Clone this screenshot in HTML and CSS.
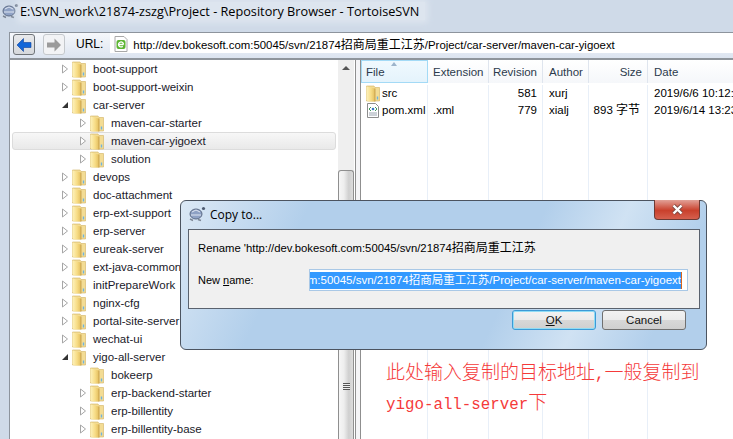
FILE: index.html
```html
<!DOCTYPE html>
<html lang="zh-CN">
<head>
  <meta charset="UTF-8" />
  <title>Repository Browser - TortoiseSVN</title>
  <link rel="stylesheet" href="styles.css">
</head>
<body>
  <svg class="defs" width="0" height="0">
    <defs>
      <linearGradient id="fold" x1="0" y1="0" x2="1" y2="0">
        <stop offset="0" stop-color="#fdf2bc"/>
        <stop offset="0.55" stop-color="#f7dc85"/>
        <stop offset="1" stop-color="#e2bd5e"/>
      </linearGradient>
      <symbol id="folder" viewBox="0 0 14 17">
        <path d="M.5 1h7.500l1 1.500h4.500v13.500H.5z" fill="#f3dc94" stroke="#d2b162" stroke-width=".6"/>
        <path d="M.5 1.500l8.500 2v13H2L.5 15z" fill="url(#fold)"/>
        <path d="M9 3.500v13" stroke="#c09a48" stroke-width=".8"/>
        <path d="M11.500 11.500v3" stroke="#6fb4de" stroke-width="1.400"/>
      </symbol>
      <symbol id="turtle" viewBox="0 0 18 16">
        <ellipse cx="8" cy="8" rx="6" ry="5" fill="#8ea1c4" stroke="#5d6b85"/>
        <path d="M4 6l4-2 4 2M3 9h10" stroke="#dfe6f2" fill="none"/>
        <circle cx="15.500" cy="2.500" r="1.600" fill="#4d5a70"/>
        <path d="M2 13l3 1.500M10 13.500l3 1" stroke="#7b8594" stroke-width="1.500"/>
      </symbol>
      <symbol id="closed" viewBox="0 0 8 10">
        <path d="M1.500 1l5 4-5 4z" fill="#fff" stroke="#a6a6a6"/>
      </symbol>
      <symbol id="opened" viewBox="0 0 8 8">
        <path d="M7 1v6H1z" fill="#333"/>
      </symbol>
    </defs>
  </svg>

  <header class="titlebar">
    <svg class="turtle"><use href="#turtle"/></svg>
    <span class="titletext">E:\SVN_work\21874-zszg\Project - Repository Browser - TortoiseSVN</span>
  </header>

  <main class="window">
    <div class="toolbar">
      <button class="navbtn active">
        <svg width="16" height="14" viewBox="0 0 16 14"><path d="M1 7l6.500-6.500v4H15v5H7.500v4z" fill="#1266d8" stroke="#0b3f9a" stroke-width=".6"/></svg>
      </button>
      <button class="navbtn">
        <svg width="16" height="14" viewBox="0 0 16 14"><path d="M15 7L8.500.5v4H1v5h7.500v4z" fill="#9b9b9b"/></svg>
      </button>
      <span class="urllabel">URL:</span>
      <div class="urlbox">
        <svg class="urlicon" width="14" height="16" viewBox="0 0 14 16">
          <path d="M1 .5h9l3 3v12H1z" fill="#fff" stroke="#a8a8a8"/>
          <rect x="2.500" y="4" width="9" height="9" rx="2" fill="#5cb531"/>
          <path d="M5 8.500h4.500M9.500 8.500a2.500 2.500 0 1 0-.8 1.800" stroke="#fff" stroke-width="1.300" fill="none"/>
        </svg>
        <span>http://dev.bokesoft.com:50045/svn/21874<span class="cjk">招商局重工江苏</span>/Project/car-server/maven-car-yigoext</span>
      </div>
    </div>

    <div class="panes">
      <div class="tree">
        <ul class="rows">
          <li class="row lv1"><svg class="tw"><use href="#closed"/></svg><svg class="fd"><use href="#folder"/></svg>boot-support</li>
          <li class="row lv1"><svg class="tw"><use href="#closed"/></svg><svg class="fd"><use href="#folder"/></svg>boot-support-weixin</li>
          <li class="row lv1"><svg class="tw"><use href="#opened"/></svg><svg class="fd"><use href="#folder"/></svg>car-server</li>
          <li class="row lv2"><svg class="tw"><use href="#closed"/></svg><svg class="fd"><use href="#folder"/></svg>maven-car-starter</li>
          <li class="row lv2 current"><svg class="tw"><use href="#closed"/></svg><svg class="fd"><use href="#folder"/></svg>maven-car-yigoext</li>
          <li class="row lv2"><svg class="tw"><use href="#closed"/></svg><svg class="fd"><use href="#folder"/></svg>solution</li>
          <li class="row lv1"><svg class="tw"><use href="#closed"/></svg><svg class="fd"><use href="#folder"/></svg>devops</li>
          <li class="row lv1"><svg class="tw"><use href="#closed"/></svg><svg class="fd"><use href="#folder"/></svg>doc-attachment</li>
          <li class="row lv1"><svg class="tw"><use href="#closed"/></svg><svg class="fd"><use href="#folder"/></svg>erp-ext-support</li>
          <li class="row lv1"><svg class="tw"><use href="#closed"/></svg><svg class="fd"><use href="#folder"/></svg>erp-server</li>
          <li class="row lv1"><svg class="tw"><use href="#closed"/></svg><svg class="fd"><use href="#folder"/></svg>eureak-server</li>
          <li class="row lv1"><svg class="tw"><use href="#closed"/></svg><svg class="fd"><use href="#folder"/></svg>ext-java-common</li>
          <li class="row lv1"><svg class="tw"><use href="#closed"/></svg><svg class="fd"><use href="#folder"/></svg>initPrepareWork</li>
          <li class="row lv1"><svg class="tw"><use href="#closed"/></svg><svg class="fd"><use href="#folder"/></svg>nginx-cfg</li>
          <li class="row lv1"><svg class="tw"><use href="#closed"/></svg><svg class="fd"><use href="#folder"/></svg>portal-site-server</li>
          <li class="row lv1"><svg class="tw"><use href="#closed"/></svg><svg class="fd"><use href="#folder"/></svg>wechat-ui</li>
          <li class="row lv1"><svg class="tw"><use href="#opened"/></svg><svg class="fd"><use href="#folder"/></svg>yigo-all-server</li>
          <li class="row lv2"><span class="tw"></span><svg class="fd"><use href="#folder"/></svg>bokeerp</li>
          <li class="row lv2"><svg class="tw"><use href="#closed"/></svg><svg class="fd"><use href="#folder"/></svg>erp-backend-starter</li>
          <li class="row lv2"><svg class="tw"><use href="#closed"/></svg><svg class="fd"><use href="#folder"/></svg>erp-billentity</li>
          <li class="row lv2"><svg class="tw"><use href="#closed"/></svg><svg class="fd"><use href="#folder"/></svg>erp-billentity-base</li>
        </ul>
        <div class="scrollbar">
          <div class="sbup"></div>
          <div class="sbthumb"><div class="grip"></div></div>
        </div>
      </div>
      <div class="splitter"></div>

      <div class="list">
        <div class="cols head">
          <div class="c1 hot">File</div>
          <div class="c2">Extension</div>
          <div class="c3">Revision</div>
          <div class="c4">Author</div>
          <div class="c5">Size</div>
          <div class="c6">Date</div>
        </div>
        <div class="cols item first">
          <div class="c1"><svg class="fd"><use href="#folder"/></svg>src</div>
          <div class="c2"></div>
          <div class="c3">581</div>
          <div class="c4">xurj</div>
          <div class="c5"></div>
          <div class="c6">2019/6/6 10:12:</div>
        </div>
        <div class="cols item fill">
          <div class="c1">
            <svg class="fd" viewBox="0 0 14 17"><path d="M1.500 1.500h8l3 3v11h-11z" fill="#fff" stroke="#8d8d8d"/><path d="M3 11h8M3 13h8" stroke="#9aa4b0"/><path d="M5 5L3 7l2 2M9 5l2 2-2 2" stroke="#3f9a5b" fill="none"/><circle cx="7" cy="7" r="1.300" fill="#3a76c4"/></svg>pom.xml
          </div>
          <div class="c2">.xml</div>
          <div class="c3">779</div>
          <div class="c4">xialj</div>
          <div class="c5">893 <span class="cjk">字节</span></div>
          <div class="c6">2019/6/14 13:23</div>
        </div>
      </div>
    </div>
  </main>

  <section class="dialog">
    <div class="dlgtitle">
      <svg class="turtle"><use href="#turtle"/></svg>
      <span>Copy to...</span>
      <div class="closebtn">
        <svg width="13" height="11" viewBox="0 0 13 11"><path d="M2.500 1.500l8 8M10.500 1.500l-8 8" stroke="#7a4a44" stroke-width="4"/><path d="M2.500 1.500l8 8M10.500 1.500l-8 8" stroke="#fff" stroke-width="2.400"/></svg>
      </div>
    </div>
    <div class="dlgbody">
      <p class="dlgtext">Rename 'http://dev.bokesoft.com:50045/svn/21874<span class="cjk">招商局重工江苏</span></p>
      <div class="dlgfield">
        <label>New <u>n</u>ame:</label>
        <div class="input"><span class="sel">om:50045/svn/21874<span class="cjk">招商局重工江苏</span>/Project/car-server/maven-car-yigoext</span></div>
      </div>
    </div>
    <div class="dlgbtns">
      <button class="btn default"><u>O</u>K</button>
      <button class="btn">Cancel</button>
    </div>
  </section>

  <p class="note">
    <span>此处输入复制的目标地址</span><span class="mono">,</span><span>一般复制到</span><br>
    <span class="mono">yigo-all-server</span><span>下</span>
  </p>
</body>
</html>
```

FILE: styles.css
```css
* { box-sizing: border-box; }
html, body { height: 100%; }
body {
  margin: 0;
  overflow: hidden;
  background: #cfdae8;
  color: #000;
  font-family: "Liberation Sans", "Noto Sans CJK SC", sans-serif;
  font-size: 11.500px;
  display: flex;
  flex-direction: column;
}
.defs { position: absolute; }
svg { display: block; flex: none; }
.cjk { font-size: 12px; }

/* title bar */
.titlebar {
  height: 32px;
  flex: none;
  display: flex;
  align-items: center;
  padding: 0 0 11px 1px;
}
.turtle { width: 18px; height: 16px; }
.titletext {
  margin-left: 1px;
  font-family: "Open Sans", sans-serif;
  font-size: 12.700px;
  padding-right: 6px;
  background: #dde5ef;
  box-shadow: 0 0 6px 3px #dde5ef;
}

/* main window */
.window {
  flex: 1;
  margin-left: 9px;
  border-top: 1px solid #8d949d;
  border-left: 1px solid #8d949d;
  display: flex;
  flex-direction: column;
  min-height: 0;
}
.toolbar {
  height: 27px;
  flex: none;
  display: flex;
  align-items: flex-start;
  padding: 1px 0 0 3px;
  background: linear-gradient(#f6f8fb, #dce4f0);
  border-bottom: 2px solid #8f959c;
}
.navbtn {
  width: 22px;
  height: 21px;
  margin-right: 8px;
  padding: 0;
  border: 1px solid #c4c8cc;
  border-radius: 3px;
  background: #f2f3f5;
  display: flex;
  align-items: center;
  justify-content: center;
}
.navbtn.active { border-color: #6f7479; background: linear-gradient(#e8e9eb, #d5d8dc); }
.urllabel { margin: 3px 7px 0 3px; font-size: 12px; }
.urlbox {
  flex: 1;
  height: 20px;
  margin-top: -1px;
  display: flex;
  align-items: center;
  padding: 1px 0 0 4px;
  background: #fff;
  font-size: 11.400px;
  white-space: nowrap;
  overflow: hidden;
}
.urlicon { margin-right: 5px; }

.panes { flex: 1; display: flex; min-height: 0; }

/* left tree */
.tree {
  width: 345px;
  flex: none;
  display: flex;
  background: #fff;
  overflow: hidden;
}
.rows { flex: 1; margin: 0; padding: 0 0 0 2px; list-style: none; min-width: 0; }
.row {
  height: 18px;
  display: flex;
  align-items: center;
  white-space: nowrap;
  color: #1a1a2a;
}
.lv1 { padding-left: 49px; }
.lv2 { padding-left: 67px; }
.tw { width: 8px; height: 10px; margin-right: 3px; }
.fd { width: 14px; height: 17px; margin-right: 7px; }
.current {
  background: linear-gradient(#f7f7f7, #e9e9e9);
  border: 1px solid #dcdcdc;
  border-radius: 3px;
  margin-right: 2px;
  padding-left: 66px;
}
.scrollbar {
  width: 16px;
  flex: none;
  background: #efefef;
  display: flex;
  flex-direction: column;
  margin-right: 1px;
}
.sbup {
  height: 110px;
  flex: none;
  position: relative;
}
.sbup::before {
  content: "";
  position: absolute;
  left: 4px;
  top: 6px;
  border: 4px solid transparent;
  border-top: 0;
  border-bottom: 4px solid #555;
}
.sbthumb {
  flex: 1;
  border: 1px solid #8f8f8f;
  border-bottom: 0;
  border-radius: 3px 3px 0 0;
  background: linear-gradient(90deg, #f6f6f6, #eeeeee 35%, #cfcfcf 70%, #dcdcdc);
  display: flex;
  justify-content: center;
  padding-top: 212px;
}
.grip { width: 7px; height: 7px; background: repeating-linear-gradient(#555 0 1px, #eee 1px 2px); }

.splitter {
  width: 6px;
  flex: none;
  border-left: 1px solid #8f8f8f;
  border-right: 1px solid #8f8f8f;
  background: #f4f4f6;
}

/* right list */
.list { flex: 1; display: flex; flex-direction: column; background: #fff; min-width: 0; overflow: hidden; }
.cols { display: grid; grid-template-columns: 67px 61px 54px 46px 59px 1fr; white-space: nowrap; }
.cols > div { display: flex; align-items: center; padding: 0 5px; min-width: 0; overflow: hidden; }
.head { height: 23px; flex: none; background: linear-gradient(#fff, #f5f7fa); color: #2c3a4c; }
.head > div { border-right: 1px solid #dfe5ee; padding-top: 1px; }
.head .hot {
  position: relative;
  overflow: visible;
  background: linear-gradient(#f0f9fe, #e4f3fc);
  border: 1px solid #a3daf6;
}
.hot::after {
  content: "";
  position: absolute;
  left: 29px;
  top: 1px;
  border: 3.500px solid transparent;
  border-top: 0;
  border-bottom: 4px solid #9db4cb;
}
.item { height: 17px; flex: none; line-height: 17px; }
.item.first { margin-top: 2px; }
.item.fill { flex: 1; }
.item > div { border-right: 1px solid #e8eff8; }
.item.fill > div { height: 100%; align-items: flex-start; }
.c1 { padding-left: 4px !important; }
.c1 .fd { margin-right: 2px; margin-left: 1px; }
.c3, .c5 { justify-content: flex-end; white-space: pre; }
.item .c5 { padding-right: 7px; }
.item .c4, .head .c4 { padding-left: 6px; }
.c6 { border-right: 0 !important; padding: 0 0 0 6px !important; }

/* copy dialog */
.dialog {
  position: absolute;
  left: 180px;
  top: 200px;
  width: 527px;
  height: 150px;
  padding: 0 6px 0 7px;
  border: 1px solid #4c5460;
  border-radius: 6px;
  background: linear-gradient(115deg, #dbe8f5 0, #b2cfeb 22%, #b2cfeb 62%, #d0e2f3 76%, #b2cfeb 90%);
  display: flex;
  flex-direction: column;
}
.dlgtitle {
  height: 28px;
  flex: none;
  display: flex;
  align-items: center;
  font-family: "Open Sans", sans-serif;
  font-size: 12px;
  position: relative;
  padding-bottom: 2px;
}
.dlgtitle span { margin-left: 4px; }
.closebtn {
  position: absolute;
  right: 0;
  top: -1px;
  width: 46px;
  height: 20px;
  border: 1px solid #6d3a34;
  border-top: 0;
  border-radius: 0 0 4px 4px;
  background: linear-gradient(#e2a197, #c9402c 55%, #d5604e);
  display: flex;
  align-items: center;
  justify-content: center;
}
.dlgbody {
  height: 80px;
  flex: none;
  padding: 11px 11px 0 9px;
  background: #f0f0f0;
  border: 1px solid #5a626e;
}
.dlgtext { margin: 0; height: 15px; line-height: 15px; font-size: 11.300px; white-space: nowrap; }
.dlgfield { display: flex; align-items: center; margin-top: 13px; }
.dlgfield label { width: 111px; flex: none; font-size: 11px; }
.input {
  flex: 1;
  height: 22px;
  min-width: 0;
  display: flex;
  justify-content: flex-end;
  align-items: center;
  padding: 0 5px 0 1px;
  background: #fff;
  border: 1px solid #a9c8e6;
  overflow: hidden;
  white-space: nowrap;
}
.sel {
  flex: none;
  background: #3399ff;
  color: #fff;
  line-height: 17px;
  border-right: 1px solid #d9651c;
}
.sel .cjk { font-size: 11.500px; }
.dlgbtns {
  display: flex;
  justify-content: flex-end;
  gap: 6px;
  padding: 1px 14px 0 0;
}
.btn {
  width: 84px;
  height: 20px;
  padding: 0;
  border: 1px solid #707070;
  border-radius: 3px;
  background: linear-gradient(#f2f2f2, #ebebeb 48%, #d8d8d8 50%, #cfcfcf);
  font: inherit;
  color: #111;
}
.btn.default { border-color: #3c9ad6; box-shadow: inset 0 0 0 1px #8fdcf5; }

/* red remark on top of the screenshot */
.note {
  position: absolute;
  left: 386px;
  top: 358px;
  margin: 0;
  color: #f53a3a;
  font-family: "Noto Sans CJK SC", sans-serif;
  font-size: 19px;
  font-weight: 300;
  line-height: 25px;
  white-space: nowrap;
}
.mono { font-family: "Liberation Mono", monospace; font-size: 15.800px; }
```
